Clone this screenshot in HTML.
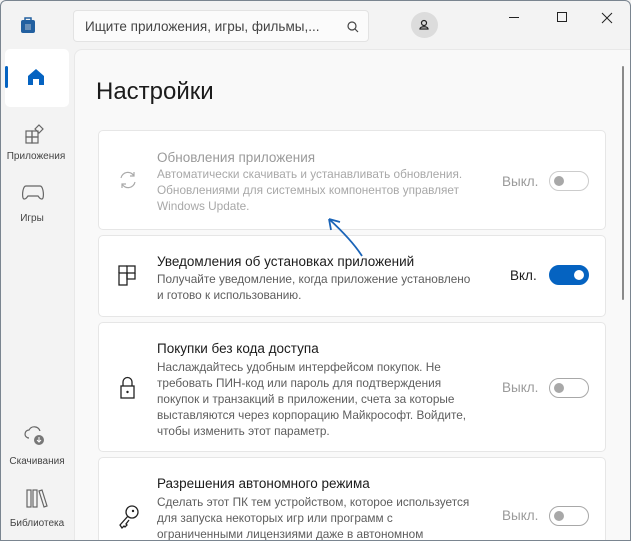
<!DOCTYPE html>
<html style="overflow:hidden;width:631px;height:541px"><head><meta charset="utf-8"><style>
*{box-sizing:border-box;margin:0;padding:0}
body{width:631px;height:541px;overflow:hidden;background:#f3f3f3;font-family:"Liberation Sans","Noto Sans CJK SC",sans-serif;position:relative;color:#1b1b1b}
.frame{position:absolute;left:0;top:0;width:631px;height:541px;border:1px solid #7a8590;border-radius:6px 6px 0 0;pointer-events:none}
.search{position:absolute;left:73px;top:10px;width:296px;height:32px;background:#fbfbfb;border:1px solid #e3e3e3;border-radius:4px;font-size:13.5px;color:#444;padding:8px 0 0 11px;white-space:nowrap;overflow:hidden}
.panel{position:absolute;left:74px;top:49px;width:560px;height:492px;background:#f9f9f9;border:1px solid #e8e8e8;border-radius:8px 0 0 0}
.card{position:absolute;left:98px;width:508px;background:#fff;border:1px solid #e6e6e6;border-radius:5px}
.t{position:absolute;left:58px;font-size:13.5px}
.d{position:absolute;left:58px;font-size:11.8px;line-height:16px;color:#5d5d5d;width:322px}
.lab{position:absolute;left:403px;font-size:13.5px;color:#9a9a9a}
.tog{position:absolute;left:450px;width:40px;height:20px;border:1px solid #a8a8a8;border-radius:10px}
.tog:after{content:"";position:absolute;left:4px;top:4px;width:10px;height:10px;border-radius:50%;background:#a8a8a8}
.tog.on{background:#0563c1;border-color:#0563c1}
.tog.on:after{left:24px;background:#fff}
.ic{position:absolute;left:18px}
.nav{position:absolute;width:64px;text-align:center;font-size:10px;color:#444}
</style></head><body>
<svg style="position:absolute;left:20px;top:16px" width="16" height="18"><rect x="1" y="4" width="14" height="13" rx="2" fill="#2260a0"/><path d="M5 4V2h6v2" stroke="#2260a0" fill="none" stroke-width="1.5"/><rect x="5" y="8" width="6" height="6" fill="#6a90b8"/></svg>
<div class="search">Ищите приложения, игры, фильмы,...</div>
<svg style="position:absolute;left:346px;top:20px" width="14" height="14"><circle cx="6" cy="6" r="4" stroke="#444" fill="none" stroke-width="1.2"/><path d="M9 9l3 3" stroke="#444" stroke-width="1.2"/></svg>
<div style="position:absolute;left:411px;top:12px;width:27px;height:26px;border-radius:50%;background:#dcdcdc"></div>
<svg style="position:absolute;left:416px;top:17px" width="16" height="16"><circle cx="8" cy="6" r="2.5" stroke="#222" fill="none" stroke-width="1.2"/><path d="M4 12c0-3 8-3 8 0z" stroke="#222" fill="none" stroke-width="1.2"/></svg>
<div style="position:absolute;left:509px;top:17px;width:10px;height:1px;background:#222"></div>
<div style="position:absolute;left:557px;top:12px;width:10px;height:10px;border:1px solid #222"></div>
<svg style="position:absolute;left:601px;top:12px" width="12" height="12"><path d="M1 1l10 10M11 1L1 11" stroke="#222" stroke-width="1"/></svg>
<div style="position:absolute;left:5px;top:49px;width:64px;height:58px;background:#fff;border-radius:5px"></div>
<div style="position:absolute;left:5px;top:66px;width:3px;height:22px;background:#0563c1;border-radius:2px"></div>
<svg style="position:absolute;left:26px;top:67px" width="20" height="20"><path d="M2 9L10 2l8 7v9h-5v-6H7v6H2z" fill="#0563c1"/></svg>
<svg style="position:absolute;left:24px;top:123px" width="22" height="22"><g stroke="#666" fill="none" stroke-width="1.2"><rect x="2" y="8" width="6" height="6"/><rect x="8" y="8" width="6" height="6"/><rect x="2" y="14" width="6" height="6"/><rect x="8" y="14" width="6" height="6"/><path d="M15 2l4 4-4 4-4-4z"/></g></svg>
<div class="nav" style="left:4px;top:151px">Приложения</div>
<svg style="position:absolute;left:21px;top:184px" width="24" height="18"><path d="M5 2h14c3 0 4 8 3 12-1 2-3 1-5-2H7c-2 3-4 4-5 2-1-4 0-12 3-12z" stroke="#666" fill="none" stroke-width="1.2"/></svg>
<div class="nav" style="left:0;top:213px">Игры</div>
<svg style="position:absolute;left:22px;top:424px" width="24" height="24"><path d="M7 14a4 4 0 010-8 6 6 0 0111 1" stroke="#666" fill="none" stroke-width="1.2"/><circle cx="17" cy="16" r="5" fill="#777"/><path d="M17 13v5M15 16l2 2 2-2" stroke="#fff" fill="none"/></svg>
<div class="nav" style="left:5px;top:456px">Скачивания</div>
<svg style="position:absolute;left:26px;top:488px" width="22" height="22"><g stroke="#666" fill="none" stroke-width="1.2"><rect x="1" y="2" width="4" height="17"/><rect x="7" y="2" width="4" height="17"/><path d="M13 3l3-1 5 16-3 1z"/></g></svg>
<div class="nav" style="left:5px;top:518px">Библиотека</div>
<div class="panel"></div>
<div style="position:absolute;left:622px;top:66px;width:2px;height:234px;background:#8a8a8a;border-radius:1px"></div>
<div style="position:absolute;left:96px;top:78px;font-size:24px;color:#1b1b1b">Настройки</div>

<div class="card" style="top:130px;height:100px">
<svg class="ic" style="top:38px" width="22" height="22"><g stroke="#aaa" fill="none" stroke-width="1.2"><path d="M4 9a7 7 0 0113-2M18 13a7 7 0 01-13 2"/><path d="M17 3v4h-4M5 19v-4h4"/></g></svg>
<div class="t" style="top:19px;color:#9a9a9a">Обновления приложения</div>
<div class="d" style="top:35px;color:#a8a8a8">Автоматически скачивать и устанавливать обновления. Обновлениями для системных компонентов управляет Windows Update.</div>
<div class="lab" style="top:43px">Выкл.</div><div class="tog" style="top:40px;border-color:#ccc"></div>
</div>

<div class="card" style="top:235px;height:82px">
<svg class="ic" style="top:28px" width="22" height="22"><g stroke="#222" fill="none" stroke-width="1.3"><rect x="2" y="9" width="8" height="12"/><rect x="10" y="2" width="8" height="7"/><path d="M2 9V2h8M10 9v6h8V9"/></g></svg>
<div class="t" style="top:18px;color:#1b1b1b">Уведомления об установках приложений</div>
<div class="d" style="top:35px">Получайте уведомление, когда приложение установлено и готово к использованию.</div>
<div class="lab" style="top:32px;left:411px;color:#1b1b1b">Вкл.</div><div class="tog on" style="top:29px"></div>
</div>

<div class="card" style="top:322px;height:130px">
<svg class="ic" style="top:52px" width="22" height="26"><g stroke="#222" fill="none" stroke-width="1.3"><rect x="4" y="11" width="13" height="12"/><path d="M6 11V7a4.5 4.5 0 019 0v4"/></g><circle cx="10.5" cy="17" r="1.2" fill="#222"/></svg>
<div class="t" style="top:18px">Покупки без кода доступа</div>
<div class="d" style="top:36px">Наслаждайтесь удобным интерфейсом покупок. Не требовать ПИН-код или пароль для подтверждения покупок и транзакций в приложении, счета за которые выставляются через корпорацию Майкрософт. Войдите, чтобы изменить этот параметр.</div>
<div class="lab" style="top:57px">Выкл.</div><div class="tog" style="top:55px"></div>
</div>

<div class="card" style="top:457px;height:100px">
<svg class="ic" style="top:46px" width="24" height="26"><g stroke="#222" fill="none" stroke-width="1.3"><circle cx="15" cy="8" r="6"/><path d="M11 12L3 21l2 3 2-2 1 1 2-2-1-1 3-4"/></g><circle cx="16" cy="7" r="1.2" fill="#222"/></svg>
<div class="t" style="top:18px">Разрешения автономного режима</div>
<div class="d" style="top:36px">Сделать этот ПК тем устройством, которое используется для запуска некоторых игр или программ с ограниченными лицензиями даже в автономном</div>
<div class="lab" style="top:50px">Выкл.</div><div class="tog" style="top:48px"></div>
</div>
<svg style="position:absolute;left:320px;top:215px" width="50" height="50"><path d="M42 41C35 30 22 16 9 4" stroke="#1a64b8" fill="none" stroke-width="1.8"/><path d="M9 4l11 3M9 4l2 11" stroke="#1a64b8" fill="none" stroke-width="1.8"/></svg>
<div class="frame"></div>
</body></html>
